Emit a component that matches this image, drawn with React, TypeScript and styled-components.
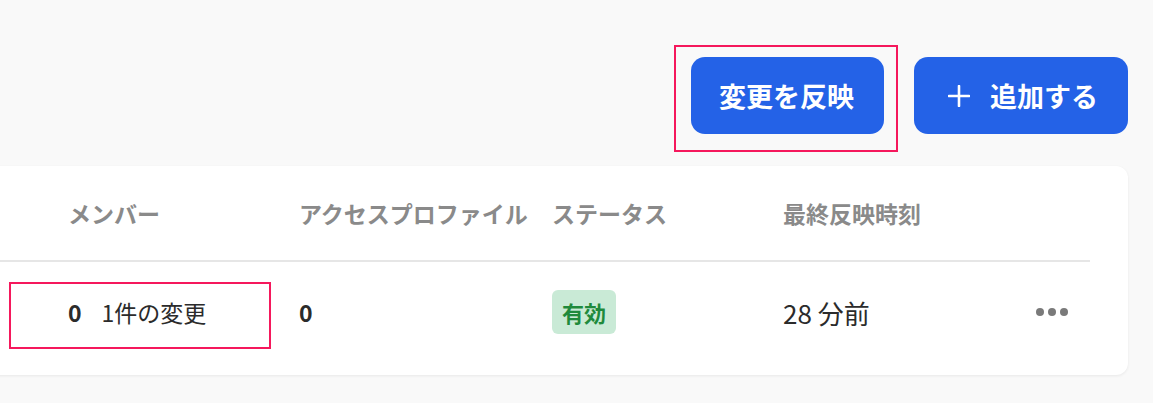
import React from "react";
import styled, { createGlobalStyle } from "styled-components";

const GlobalStyle = createGlobalStyle`
  html, body {
    margin: 0;
    padding: 0;
    background: #f9f9f9;
    font-family: "Noto Sans CJK JP", "Noto Sans", sans-serif;
    overflow: hidden;
  }
  * { box-sizing: border-box; }
`;

const Page = styled.div`
  width: 1153px;
  height: 403px;
  display: flex;
  flex-direction: column;
`;

const Toolbar = styled.div`
  display: flex;
  justify-content: flex-end;
  align-items: center;
  gap: 30px;
  padding: 57px 25px 0 0;
`;

const Highlight = styled.div<{ $inset: string }>`
  position: relative;
  display: flex;
  align-items: center;
  &::after {
    content: "";
    position: absolute;
    inset: ${(p) => p.$inset};
    border: 2px solid #f5185c;
    pointer-events: none;
  }
`;

const Button = styled.button<{ $padLeft: number }>`
  height: 77px;
  display: flex;
  align-items: center;
  gap: 20px;
  padding: 0 30px 0 ${(p) => p.$padLeft}px;
  border: none;
  border-radius: 14px;
  background: #2462e7;
  color: #fff;
  font-family: inherit;
  font-size: 27px;
  font-weight: 700;
  letter-spacing: 0;
  cursor: pointer;
`;

const Card = styled.div`
  margin: 32px 25px 0 -20px;
  background: #fff;
  border-radius: 12px;
  box-shadow: 0 1px 3px rgba(0, 0, 0, 0.07);
  padding: 0 38px 13px 0;
`;

const Row = styled.div<{ $header?: boolean }>`
  display: grid;
  grid-template-columns: 231px 253px 231px 253px 1fr;
  align-items: center;
  padding-left: 88px;
  height: ${(p) => (p.$header ? "96px" : "100px")};
  border-bottom: ${(p) => (p.$header ? "2px solid #e6e6e6" : "none")};
`;

const HeadCell = styled.div`
  font-size: 23px;
  font-weight: 700;
  color: #8a8a8a;
  white-space: nowrap;
`;

const Cell = styled.div<{ $size?: number }>`
  display: flex;
  align-items: center;
  font-size: ${(p) => p.$size ?? 23}px;
  color: #2b2b2b;
  white-space: nowrap;
`;

const Count = styled.span`
  font-weight: 700;
  margin-right: 20px;
`;

const Badge = styled.span`
  display: inline-flex;
  align-items: center;
  justify-content: center;
  height: 44px;
  padding: 0 10px;
  border-radius: 6px;
  background: #c9ead6;
  color: #1f8a3c;
  font-size: 22px;
  font-weight: 700;
`;

const PlusIcon = () => (
  <svg width="22" height="22" viewBox="0 0 22 22" fill="none">
    <path d="M11 1v20M1 11h20" stroke="#fff" strokeWidth="2.6" strokeLinecap="round" />
  </svg>
);

const Dots = () => (
  <svg width="32" height="10" viewBox="0 0 32 10">
    <circle cx="4" cy="5" r="4" fill="#7a7a7a" />
    <circle cx="16" cy="5" r="4" fill="#7a7a7a" />
    <circle cx="28" cy="5" r="4" fill="#7a7a7a" />
  </svg>
);

export default function App() {
  return (
    <Page>
      <GlobalStyle />
      <Toolbar>
        <Highlight $inset="-12px -14px -18px -17px">
          <Button $padLeft={28}>変更を反映</Button>
        </Highlight>
        <Button $padLeft={34}>
          <PlusIcon />
          追加する
        </Button>
      </Toolbar>
      <Card>
        <Row $header>
          <HeadCell>メンバー</HeadCell>
          <HeadCell>アクセスプロファイル</HeadCell>
          <HeadCell>ステータス</HeadCell>
          <HeadCell>最終反映時刻</HeadCell>
          <HeadCell />
        </Row>
        <Row>
          <Cell>
            <Highlight $inset="-13px -65px -20px -59px">
              <Count>0</Count>
              1件の変更
            </Highlight>
          </Cell>
          <Cell>
            <Count>0</Count>
          </Cell>
          <Cell>
            <Badge>有効</Badge>
          </Cell>
          <Cell $size={26}>28 分前</Cell>
          <Cell>
            <Dots />
          </Cell>
        </Row>
      </Card>
    </Page>
  );
}
